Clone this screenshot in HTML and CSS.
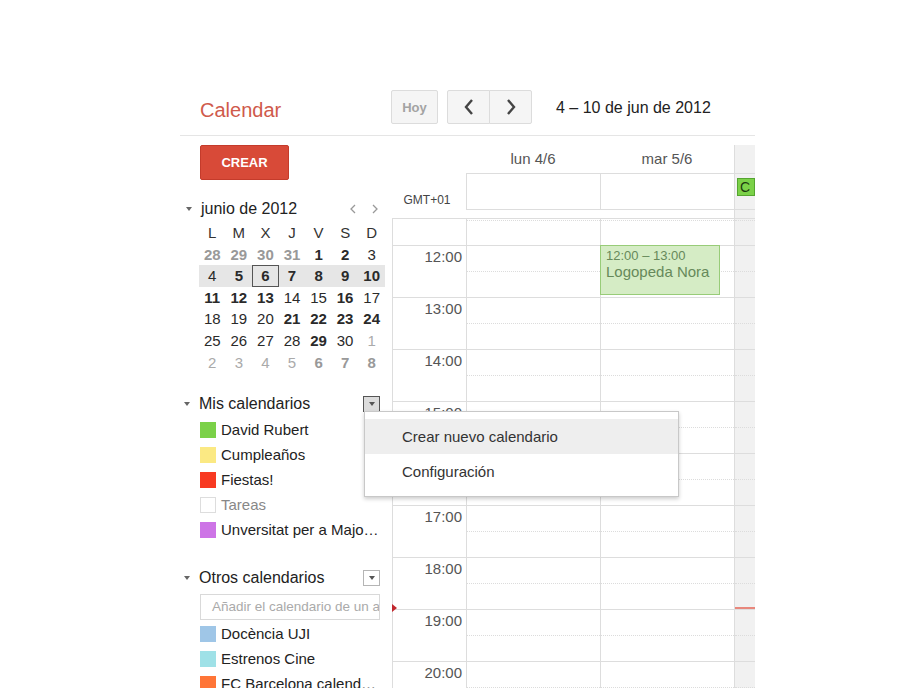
FILE: index.html
```html
<!DOCTYPE html>
<html lang="es">
<head>
<meta charset="utf-8">
<title>Calendar</title>
<link rel="stylesheet" href="styles.css">
</head>
<body>
<div class="app">
  <header class="topbar">
    <div class="logo">Calendar</div>
    <div class="btn hoy">Hoy</div>
    <div class="navgroup">
      <div class="btn nav prev"><svg width="12" height="18" viewBox="0 0 12 18"><path d="M9 2 L3 9 L9 16" fill="none" stroke="#444" stroke-width="2.4"/></svg></div>
      <div class="btn nav next"><svg width="12" height="18" viewBox="0 0 12 18"><path d="M3 2 L9 9 L3 16" fill="none" stroke="#444" stroke-width="2.4"/></svg></div>
    </div>
    <div class="range">4 – 10 de jun de 2012</div>
  </header>

  <div class="main">
    <aside class="sidebar">
      <div class="create">CREAR</div>

      <div class="minical">
        <div class="mc-title">
          <span class="tri"></span>
          <span class="label">junio de 2012</span>
          <span class="mc-arrows">
            <svg width="6" height="10" viewBox="0 0 6 10"><path d="M5 1 L1 5 L5 9" fill="none" stroke="#999" stroke-width="1.3"/></svg>
            <svg width="6" height="10" viewBox="0 0 6 10"><path d="M1 1 L5 5 L1 9" fill="none" stroke="#999" stroke-width="1.3"/></svg>
          </span>
        </div>
        <div class="mc-grid">
          <span class="hd">L</span><span class="hd">M</span><span class="hd">X</span><span class="hd">J</span><span class="hd">V</span><span class="hd">S</span><span class="hd">D</span>
          <span class="o b">28</span><span class="o b">29</span><span class="o b">30</span><span class="o b">31</span><span class="b">1</span><span class="b">2</span><span>3</span>
          <span class="wk">4</span><span class="wk b">5</span><span class="wk b sel">6</span><span class="wk b">7</span><span class="wk b">8</span><span class="wk b">9</span><span class="wk b">10</span>
          <span class="b">11</span><span class="b">12</span><span class="b">13</span><span>14</span><span>15</span><span class="b">16</span><span>17</span>
          <span>18</span><span>19</span><span>20</span><span class="b">21</span><span class="b">22</span><span class="b">23</span><span class="b">24</span>
          <span>25</span><span>26</span><span>27</span><span>28</span><span class="b">29</span><span>30</span><span class="o">1</span>
          <span class="o">2</span><span class="o">3</span><span class="o">4</span><span class="o">5</span><span class="o b">6</span><span class="o b">7</span><span class="o b">8</span>
        </div>
      </div>

      <div class="sec-head mis">
        <span class="tri"></span>
        <span class="label">Mis calendarios</span>
        <span class="ddbox active"><span class="tri-s"></span></span>
      </div>
      <ul class="cal-list">
        <li><span class="sw" style="background:#7bd148"></span>David Rubert</li>
        <li><span class="sw" style="background:#fbe983"></span>Cumpleaños</li>
        <li><span class="sw" style="background:#f83a22"></span>Fiestas!</li>
        <li class="off"><span class="sw empty"></span>Tareas</li>
        <li><span class="sw" style="background:#cd74e6"></span>Unversitat per a Majo…</li>
      </ul>

      <div class="sec-head otros">
        <span class="tri"></span>
        <span class="label">Otros calendarios</span>
        <span class="ddbox"><span class="tri-s"></span></span>
      </div>
      <div class="add-input">Añadir el calendario de un amigo</div>
      <ul class="cal-list second">
        <li><span class="sw" style="background:#9fc6e7"></span>Docència UJI</li>
        <li><span class="sw" style="background:#9fe1e7"></span>Estrenos Cine</li>
        <li><span class="sw" style="background:#ff7537"></span>FC Barcelona calend…</li>
      </ul>
    </aside>

    <section class="cal">
      <div class="headrow">
        <div></div>
        <div class="day">lun 4/6</div>
        <div class="day">mar 5/6</div>
        <div class="today"></div>
      </div>
      <div class="allday">
        <div class="tz">GMT+01</div>
        <div class="dc"></div>
        <div class="dc"></div>
        <div class="dc today"><div class="chip">C</div></div>
      </div>
      <div class="gap">
        <div></div><div></div><div></div><div class="today"></div>
      </div>
      <div class="scroll">
        <div class="hour partial"><div class="t"></div><div class="dc"></div><div class="dc"></div><div class="dc today"></div></div>
        <div class="hour"><div class="t">12:00</div><div class="dc"></div><div class="dc"><div class="event"><div class="ev-time">12:00 – 13:00</div><div class="ev-name">Logopeda Nora</div></div></div><div class="dc today"></div></div>
        <div class="hour"><div class="t">13:00</div><div class="dc"></div><div class="dc"></div><div class="dc today"></div></div>
        <div class="hour"><div class="t">14:00</div><div class="dc"></div><div class="dc"></div><div class="dc today"></div></div>
        <div class="hour"><div class="t">15:00</div><div class="dc"></div><div class="dc"></div><div class="dc today"></div></div>
        <div class="hour"><div class="t">16:00</div><div class="dc"></div><div class="dc"></div><div class="dc today"></div></div>
        <div class="hour"><div class="t">17:00</div><div class="dc"></div><div class="dc"></div><div class="dc today"></div></div>
        <div class="hour"><div class="t">18:00<span class="now-tri"></span></div><div class="dc"></div><div class="dc"></div><div class="dc today"><span class="now-line"></span></div></div>
        <div class="hour"><div class="t">19:00</div><div class="dc"></div><div class="dc"></div><div class="dc today"></div></div>
        <div class="hour"><div class="t">20:00</div><div class="dc"></div><div class="dc"></div><div class="dc today"></div></div>
      </div>
    </section>
  </div>

  <div class="menu">
    <div class="item hover">Crear nuevo calendario</div>
    <div class="item">Configuración</div>
  </div>
</div>
</body>
</html>
```

FILE: styles.css
```css
* { box-sizing: border-box; }
body {
  margin: 0;
  background: #fff;
  font-family: "Liberation Sans", Arial, sans-serif;
  color: #222;
}
ul { list-style: none; margin: 0; padding: 0; }

.app {
  position: relative;
  margin: 85px 0 0 180px;
  width: 575px;
  height: 603px;
  overflow: hidden;
}

/* top bar */
.topbar {
  display: flex;
  align-items: flex-start;
  height: 51px;
  border-bottom: 1px solid #e5e5e5;
}
.logo {
  width: 211px;
  padding-left: 20px;
  margin-top: 13px;
  font-size: 20px;
  line-height: 24px;
  color: #cf5a4b;
}
.btn {
  height: 34px;
  margin-top: 5px;
  background: #f5f5f5;
  border: 1px solid #dcdcdc;
  border-radius: 2px;
  display: flex;
  align-items: center;
  justify-content: center;
}
.hoy {
  width: 47px;
  font-size: 13px;
  font-weight: bold;
  color: #a3a3a3;
}
.navgroup {
  display: flex;
  margin-left: 9px;
  margin-top: 5px;
}
.navgroup .btn { margin-top: 0; width: 43px; }
.navgroup .prev { border-radius: 2px 0 0 2px; }
.navgroup .next { margin-left: -1px; border-radius: 0 2px 2px 0; }
.range {
  margin-left: 24px;
  margin-top: 13px;
  font-size: 16px;
  line-height: 20px;
  color: #222;
}

.main { display: flex; }

/* sidebar */
.sidebar { width: 212px; flex: none; }
.create {
  margin: 9px 0 0 20px;
  width: 89px;
  height: 35px;
  background: #d84a38;
  border: 1px solid #c43b2b;
  border-radius: 2px;
  color: #fff;
  font-weight: bold;
  font-size: 13px;
  display: flex;
  align-items: center;
  justify-content: center;
}

.tri {
  width: 0;
  height: 0;
  border-left: 3.5px solid transparent;
  border-right: 3.5px solid transparent;
  border-top: 4px solid #666;
  margin-right: 9px;
  flex: none;
}
.minical { margin: 19px 0 0 6px; }
.mc-title {
  display: flex;
  align-items: center;
  height: 20px;
  width: 192px;
}
.mc-title .label { flex: 1; font-size: 16px; color: #222; }
.mc-arrows { display: flex; gap: 16px; align-items: center; }
.mc-arrows svg { display: block; }

.mc-grid {
  margin: 3px 0 0 13px;
  width: 186px;
  display: grid;
  grid-template-columns: repeat(7, 1fr);
  grid-auto-rows: 21.6px;
  font-size: 15px;
  line-height: 21.6px;
  text-align: center;
  color: #2a2a2a;
}
.mc-grid .hd { color: #333; }
.mc-grid .b { font-weight: bold; }
.mc-grid .o { color: #aaa; }
.mc-grid .o.b { color: #999; }
.mc-grid .wk { background: #e6e6e6; }
.mc-grid .sel { box-shadow: inset 0 0 0 1px #555; }

.sec-head {
  display: flex;
  align-items: center;
  height: 20px;
  margin-left: 4px;
  width: 196px;
}
.sec-head .label { flex: 1; font-size: 16px; color: #222; }
.sec-head.mis { margin-top: 21px; }
.sec-head.otros { margin-top: 26px; }
.ddbox {
  width: 17px;
  height: 16px;
  border: 1px solid #b5b5b5;
  background: #fff;
  display: flex;
  align-items: center;
  justify-content: center;
}
.ddbox.active { border-color: #555; background: #dcdcdc; }
.tri-s {
  width: 0;
  height: 0;
  border-left: 3.5px solid transparent;
  border-right: 3.5px solid transparent;
  border-top: 4px solid #555;
}

.cal-list { margin-top: 3px; padding-left: 20px; }
.cal-list.second { margin-top: 1px; }
.cal-list li {
  display: flex;
  align-items: center;
  height: 25px;
  font-size: 15px;
  color: #222;
  white-space: nowrap;
}
.cal-list li.off { color: #888; }
.sw {
  width: 16px;
  height: 16px;
  margin-right: 5px;
  flex: none;
}
.sw.empty { background: #fff; border: 1px solid #ddd; }

.add-input {
  margin: 6px 0 0 20px;
  width: 180px;
  height: 26px;
  border: 1px solid #d9d9d9;
  padding-left: 11px;
  font-size: 13.5px;
  line-height: 24px;
  color: #aaa;
  white-space: nowrap;
  overflow: hidden;
}

/* calendar grid */
.cal { width: 363px; flex: none; padding-top: 9px; }
.headrow, .allday, .gap {
  display: grid;
  grid-template-columns: 74px 134px 134px 21px;
}
.headrow { height: 28px; }
.headrow .day {
  text-align: center;
  font-size: 15px;
  line-height: 28px;
  color: #555;
}
.today { background: #f1f1f1; border-left: 1px solid #ddd; }
.allday { height: 37px; }
.allday .tz {
  align-self: end;
  text-align: center;
  padding: 0 4px 3px 0;
  font-size: 12px;
  line-height: 14px;
  color: #444;
}
.allday .dc {
  border-top: 1px solid #ddd;
  border-bottom: 1px solid #ddd;
  border-left: 1px solid #ddd;
}
.chip {
  margin: 4px 0 0 2px;
  height: 18px;
  background: #7bd148;
  border: 1px solid #55a530;
  padding-left: 2px;
  font-size: 14px;
  line-height: 16px;
  color: #1d3a0f;
}
.gap { height: 8px; }

.scroll {
  border-left: 1px solid #ddd;
}
.hour {
  display: grid;
  grid-template-columns: 73px 134px 134px 21px;
  height: 52px;
  border-top: 1px solid #ddd;
}
.hour.partial { height: 27px; }
.hour .t {
  position: relative;
  text-align: right;
  padding: 2px 4px 0 0;
  font-size: 15px;
  line-height: 17px;
  color: #555;
}
.hour .dc { position: relative; border-left: 1px solid #ddd; }
.hour .dc::after {
  content: "";
  position: absolute;
  left: 0;
  right: 0;
  top: 25px;
  border-top: 1px dotted #dcdcdc;
}
.hour.partial .dc::after { top: 1px; }

.event {
  position: absolute;
  top: -1px;
  left: -1px;
  width: 120px;
  height: 50px;
  z-index: 1;
  background: #d5ecc5;
  border: 1px solid #98cc78;
  padding: 3px 5px;
  color: #66895a;
}
.ev-time { font-size: 13px; line-height: 14px; }
.ev-name { font-size: 15px; line-height: 17px; }

.now-tri {
  position: absolute;
  left: -1px;
  top: 46px;
  width: 0;
  height: 0;
  border-left: 5px solid #c1272d;
  border-top: 4px solid transparent;
  border-bottom: 4px solid transparent;
}
.now-line {
  position: absolute;
  left: 0;
  right: 0;
  top: 49px;
  height: 2px;
  background: #e8877c;
  z-index: 1;
}

/* dropdown menu */
.menu {
  position: absolute;
  left: 184px;
  top: 326px;
  width: 315px;
  height: 86px;
  border: 1px solid #c8c8c8;
  background: #fff;
  box-shadow: 0 2px 4px rgba(0, 0, 0, 0.2);
  padding-top: 7px;
  z-index: 5;
}
.menu .item {
  height: 35px;
  line-height: 35px;
  padding-left: 37px;
  font-size: 15px;
  color: #333;
}
.menu .item.hover { background: #eee; }
```
